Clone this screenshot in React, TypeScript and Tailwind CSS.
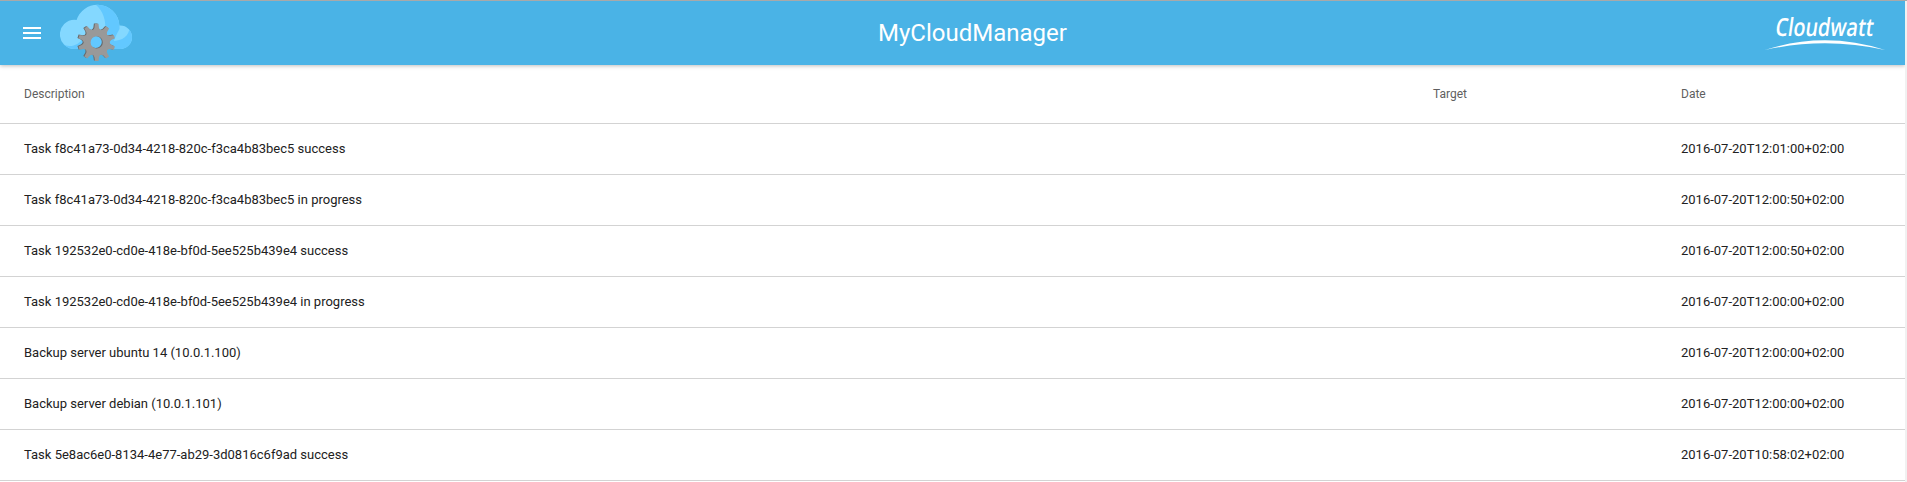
import React from "react";

const tasks = [
  ["Task f8c41a73-0d34-4218-820c-f3ca4b83bec5 success", "2016-07-20T12:01:00+02:00"],
  ["Task f8c41a73-0d34-4218-820c-f3ca4b83bec5 in progress", "2016-07-20T12:00:50+02:00"],
  ["Task 192532e0-cd0e-418e-bf0d-5ee525b439e4 success", "2016-07-20T12:00:50+02:00"],
  ["Task 192532e0-cd0e-418e-bf0d-5ee525b439e4 in progress", "2016-07-20T12:00:00+02:00"],
  ["Backup server ubuntu 14 (10.0.1.100)", "2016-07-20T12:00:00+02:00"],
  ["Backup server debian (10.0.1.101)", "2016-07-20T12:00:00+02:00"],
  ["Task 5e8ac6e0-8134-4e77-ab29-3d0816c6f9ad success", "2016-07-20T10:58:02+02:00"],
];

const teeth = [0, 36, 72, 108, 144, 180, 216, 252, 288, 324];

function Gear() {
  return (
    <>
      <circle r="9.6" fill="none" stroke="currentColor" strokeWidth="7" />
      {teeth.map((a) => (
        <path key={a} d="M-4 -11.500L-2.300 -14.500L-1.800 -18.600H1.800L2.300 -14.500L4 -11.500Z" fill="currentColor" transform={`rotate(${a})`} />
      ))}
    </>
  );
}

function CloudGear() {
  return (
    <svg className="ml-[19px] h-16 w-[72px]" viewBox="60 1 72 64" aria-hidden="true">
      <defs>
        <clipPath id="cloud">
          <circle cx="74.500" cy="34.400" r="14.600" />
          <circle cx="97.500" cy="26.800" r="22" />
          <circle cx="120.300" cy="37.300" r="11.700" />
          <rect x="74.500" y="30" width="45.800" height="19" />
        </clipPath>
      </defs>
      <g clipPath="url(#cloud)">
        <rect x="59" y="4" width="74" height="46" fill="#84d8ff" />
        <path d="M95 4Q107 14 105 32L98 49H112Q113 40 119.500 29V4Z" fill="#62c8ff" />
        <path d="M59 41C66 49 78 47 83 38L96 34L112 41C123 41 130 35 129.500 26H133V50H59Z" fill="#62c8ff" />
      </g>
      <g transform="translate(95.700 42)" className="text-[#686868]"><Gear /></g>
      <g transform="translate(96.700 42.400)" className="text-[#999999]"><Gear /></g>
    </svg>
  );
}

function CloudwattLogo() {
  return (
    <svg className="mr-5 h-16 w-[120px] overflow-visible" viewBox="1765 1 120 64">
      <text transform="translate(1774.500 36) skewX(-8)" x="0" y="0" textLength="98" lengthAdjust="spacingAndGlyphs" className="fill-white font-['Open_Sans',sans-serif] text-[25px] font-semibold">Cloudwatt</text>
      <path d="M1765 50Q1825 30.500 1885 50Q1825 36.500 1765 50Z" fill="white" />
    </svg>
  );
}

export default function App() {
  return (
    <div className="h-[482px] overflow-hidden bg-[#f1f1f1] font-[Roboto,sans-serif]">
      <div className="h-px bg-[#a9a9a9]" />
      <div className="h-[481px] w-[1905px] overflow-hidden bg-white">
        <header className="grid h-16 grid-cols-[878px_1fr_auto] items-center bg-[#4ab3e6] text-white shadow-[0_1px_4px_rgba(0,0,0,0.26)]">
          <div className="flex items-center">
            <button aria-label="Menu" className="ml-[23px] flex w-[18px] flex-col gap-[3px]">
              <span className="h-0.5 w-full bg-white" />
              <span className="h-0.5 w-full bg-white" />
              <span className="h-0.5 w-full bg-white" />
            </button>
            <CloudGear />
          </div>
          <h1 className="text-2xl">MyCloudManager</h1>
          <CloudwattLogo />
        </header>
        <table className="w-full table-fixed border-separate border-spacing-0 text-left">
          <colgroup>
            <col className="w-[1409px]" />
            <col className="w-[248px]" />
            <col />
          </colgroup>
          <thead>
            <tr className="h-[59px] text-xs text-[#5f5f5f]">
              <th className="border-b border-[#d3d3d3] pl-6 font-normal">Description</th>
              <th className="border-b border-[#d3d3d3] pl-6 font-normal">Target</th>
              <th className="border-b border-[#d3d3d3] pl-6 font-normal">Date</th>
            </tr>
          </thead>
          <tbody>
            {tasks.map(([description, date]) => (
              <tr key={description} className="h-[51px] text-[13px] text-[#212121]">
                <td className="border-b border-[#d3d3d3] pl-6">{description}</td>
                <td className="border-b border-[#d3d3d3] pl-6" />
                <td className="border-b border-[#d3d3d3] pl-6">{date}</td>
              </tr>
            ))}
          </tbody>
        </table>
      </div>
    </div>
  );
}
